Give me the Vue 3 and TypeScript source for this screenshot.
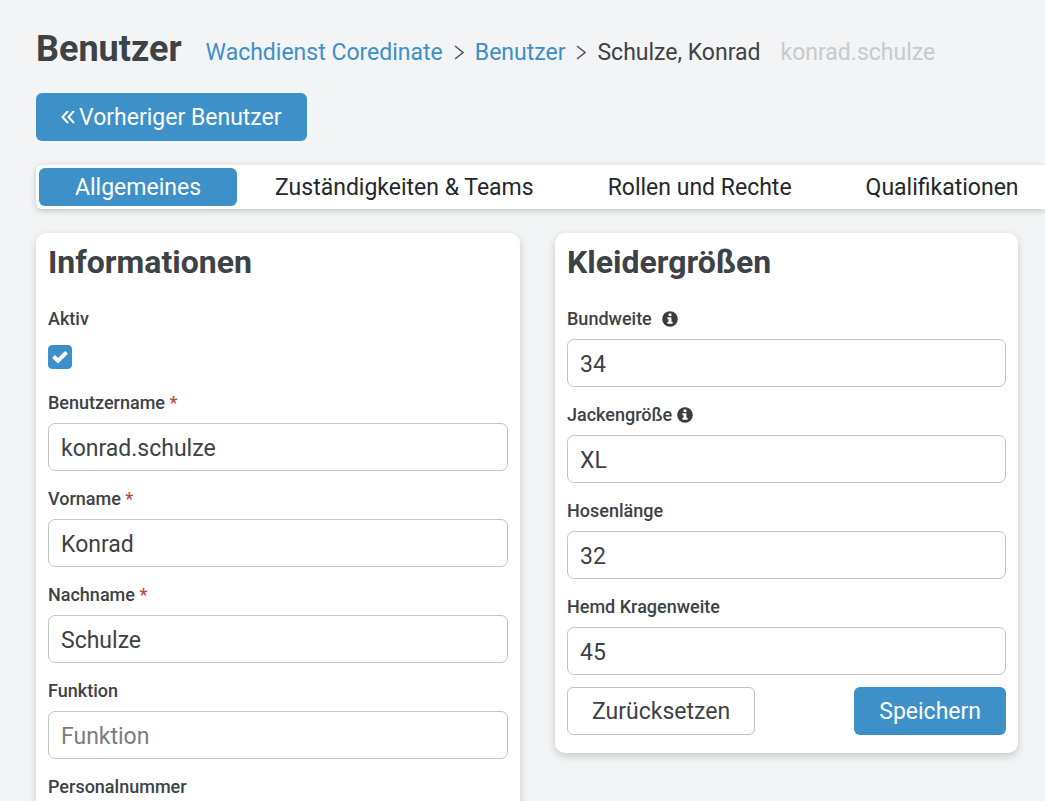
<script setup lang="ts">
import { ref } from 'vue'

interface Field {
  id: string
  label: string
  value: string
  required?: boolean
  placeholder?: string
  info?: boolean
  spaced?: boolean
}

const active = ref(true)
const currentTab = ref(0)
const tabs = ['Allgemeines', 'Zuständigkeiten & Teams', 'Rollen und Rechte', 'Qualifikationen']

const userFields = ref<Field[]>([
  { id: 'username', label: 'Benutzername', value: 'konrad.schulze', required: true },
  { id: 'firstname', label: 'Vorname', value: 'Konrad', required: true },
  { id: 'lastname', label: 'Nachname', value: 'Schulze', required: true },
  { id: 'role', label: 'Funktion', value: '', placeholder: 'Funktion' },
  { id: 'number', label: 'Personalnummer', value: '' },
])

const sizeFields = ref<Field[]>([
  { id: 'waist', label: 'Bundweite', value: '34', info: true, spaced: true },
  { id: 'jacket', label: 'Jackengröße', value: 'XL', info: true },
  { id: 'length', label: 'Hosenlänge', value: '32' },
  { id: 'collar', label: 'Hemd Kragenweite', value: '45' },
])
</script>

<template>
  <div class="page">
    <header class="head">
      <h1>Benutzer</h1>
      <nav class="crumbs" aria-label="Pfad">
        <a href="#">Wachdienst Coredinate</a>
        <svg class="chevron" viewBox="0 0 10 16" aria-hidden="true"><path d="M1 1 9 7.5 1 14" /></svg>
        <a href="#">Benutzer</a>
        <svg class="chevron" viewBox="0 0 10 16" aria-hidden="true"><path d="M1 1 9 7.5 1 14" /></svg>
        <span>Schulze, Konrad</span>
        <span class="login">konrad.schulze</span>
      </nav>
    </header>

    <button type="button" class="btn primary">
      <svg class="back" viewBox="0 0 14 14" aria-hidden="true"><path d="M7 0 1.5 6 7 12M13 0 7.5 6 13 12" /></svg>
      <span>Vorheriger Benutzer</span>
    </button>

    <nav class="tabs" aria-label="Bereiche">
      <button
        v-for="(tab, i) in tabs"
        :key="tab"
        type="button"
        class="tab"
        :class="{ current: i === currentTab }"
        @click="currentTab = i"
      >{{ tab }}</button>
    </nav>

    <main class="columns">
      <section class="card">
        <h2>Informationen</h2>
        <div class="check-field">
          <label class="label" for="active">Aktiv</label>
          <span class="check">
            <input id="active" v-model="active" type="checkbox" />
            <svg v-if="active" viewBox="0 0 24 24" aria-hidden="true"><path d="M5.5 11.5 10 15.8 18.5 7.3" /></svg>
          </span>
        </div>
        <div class="fields">
          <div v-for="f in userFields" :key="f.id" class="field">
            <label class="label" :for="f.id">{{ f.label }} <span v-if="f.required" class="star">*</span></label>
            <input :id="f.id" v-model="f.value" class="input" type="text" :placeholder="f.placeholder" />
          </div>
        </div>
      </section>

      <section class="card">
        <h2>Kleidergrößen</h2>
        <div class="fields">
          <div v-for="f in sizeFields" :key="f.id" class="field">
            <label class="label" :class="{ spaced: f.spaced }" :for="f.id">
              <span>{{ f.label }}</span>
              <svg v-if="f.info" class="info" viewBox="0 0 16 16" aria-hidden="true">
                <circle cx="8" cy="8" r="7.8" />
                <path d="M6.6 2.6h2.8v2.3H6.6zM5.4 6.3h4v4.5h1.2v2H5.4v-2h1.2V8.3H5.4z" />
              </svg>
            </label>
            <input :id="f.id" v-model="f.value" class="input" type="text" />
          </div>
        </div>
        <div class="actions">
          <button type="button" class="btn plain">Zurücksetzen</button>
          <button type="button" class="btn primary">Speichern</button>
        </div>
      </section>
    </main>
  </div>
</template>

<style>
body {
  background: #f2f4f6;
  overflow: hidden;
}
</style>

<style scoped>
.page {
  --blue: #3e90c9;
  --ink: #3d4247;
  padding: 24px 27px 24px 36px;
  font-family: Roboto, 'Liberation Sans', sans-serif;
  font-size: 23px;
  line-height: 28px;
  color: var(--ink);
}
.page * {
  box-sizing: border-box;
}
button,
input {
  font: inherit;
  color: inherit;
}
.head {
  display: flex;
  align-items: center;
  gap: 24px;
  margin-bottom: 19px;
  white-space: nowrap;
}
h1,
h2 {
  margin: 0;
  font-weight: 700;
}
h1 {
  font-size: 36px;
  line-height: 50px;
}
.crumbs {
  display: flex;
  align-items: center;
  gap: 11px;
  padding-top: 8px;
}
.crumbs a {
  color: var(--blue);
  text-decoration: none;
}
.chevron {
  width: 10px;
  height: 16px;
  fill: none;
  stroke: #50555a;
  stroke-width: 1.5;
}
.login {
  margin-left: 9px;
  color: #c6cacd;
}
.btn {
  display: inline-flex;
  align-items: center;
  justify-content: center;
  gap: 4px;
  height: 48px;
  padding: 2px 24px 0;
  border: 1px solid transparent;
  border-radius: 6px;
  white-space: nowrap;
}
.primary {
  background: var(--blue);
  color: #fff;
}
.plain {
  background: #fff;
  border-color: #bfc1c4;
}
.back {
  width: 14px;
  height: 14px;
  fill: none;
  stroke: #fff;
  stroke-width: 2;
}
.tabs {
  display: flex;
  gap: 2px;
  margin: 24px -27px 24px 0;
  padding: 3px;
  background: #fff;
  border-radius: 6px 0 0 6px;
  box-shadow: 0 2px 6px rgba(0, 0, 0, 0.2);
}
.tab {
  flex: none;
  height: 38px;
  padding: 2px 36px 0;
  border: 0;
  border-radius: 6px;
  background: none;
  color: #24282c;
  white-space: nowrap;
}
.tab.current {
  background: var(--blue);
  color: #fff;
}
.columns {
  display: grid;
  grid-template-columns: 484fr 463fr;
  align-items: start;
  gap: 35px;
}
.card {
  min-width: 0;
  padding: 11px 12px 18px;
  background: #fff;
  border-radius: 10px;
  box-shadow: 0 3px 8px rgba(0, 0, 0, 0.18);
}
h2 {
  margin-bottom: 27px;
  font-size: 32px;
  line-height: 36px;
}
.label {
  display: block;
  font-size: 18px;
  font-weight: 500;
  line-height: 24px;
}
.star {
  color: #b5483f;
}
.info {
  width: 16px;
  height: 16px;
  margin-left: 5px;
  vertical-align: -2px;
  fill: #373c41;
}
.info path {
  fill: #fff;
}
.spaced .info {
  margin-left: 10px;
}
.check-field {
  margin-bottom: 22px;
}
.check {
  display: grid;
  width: 24px;
  height: 24px;
  margin-top: 14px;
}
.check > * {
  grid-area: 1 / 1;
  width: 24px;
  height: 24px;
}
.check input {
  margin: 0;
  appearance: none;
  border: 1px solid var(--blue);
  border-radius: 4px;
  background: #fff;
}
.check input:checked {
  background: var(--blue);
}
.check svg {
  pointer-events: none;
  fill: none;
  stroke: #fff;
  stroke-width: 4;
}
.fields {
  display: grid;
  gap: 16px;
}
.field {
  display: grid;
  gap: 8px;
}
.input {
  width: 100%;
  height: 48px;
  padding: 2px 12px 0;
  border: 1px solid #c2c4c6;
  border-radius: 7px;
  background: #fff;
}
.input::placeholder {
  color: #7a7d7f;
  opacity: 1;
}
.actions {
  display: flex;
  justify-content: space-between;
  margin-top: 12px;
}
</style>
